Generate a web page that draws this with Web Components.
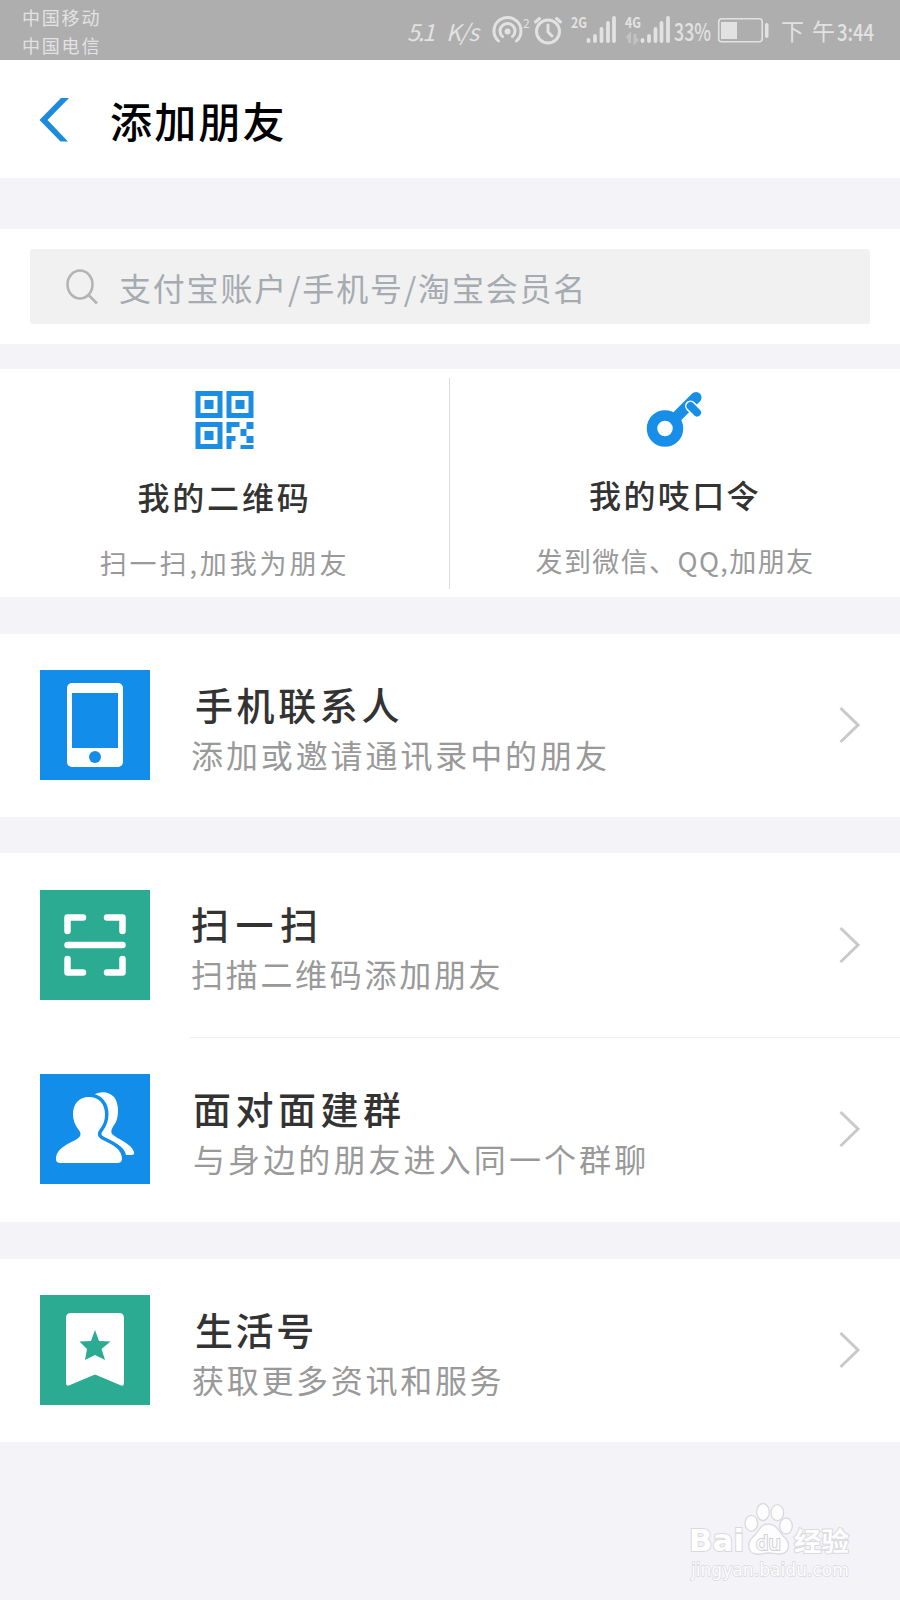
<!DOCTYPE html>
<html lang="zh-CN">
<head>
<meta charset="utf-8">
<title>添加朋友</title>
<style>
    html, body{margin:0;padding:0;}
    body{
        width:900px;
        height:1600px;
        overflow:hidden;
        background:#f4f3f8;
        font-family:"Noto Sans CJK SC", "Noto Sans", sans-serif;
        color:#333;
    }
</style>
</head>
<body>
<amigos-pagina>
    <amigos-estado slot="estado"></amigos-estado>
    <amigos-topo slot="topo">添加朋友</amigos-topo>
    <amigos-pesquisa slot="pesquisa">支付宝账户/手机号/淘宝会员名</amigos-pesquisa>

    <amigos-atalho slot="atalhos" style="--ls:2.8px;--ls-sub:2.9px">
        <svg slot="icone" width="60" height="60" viewBox="0.500 0 60 60" fill="#1b8de3">
            <path fill-rule="evenodd" d="M1 1h27v27H1zM6 6v17h17V6zM10 10h9v9h-9zM32 1h27v27H32zM37 6v17h17V6zM41 10h9v9h-9zM1 32h27v27H1zM6 37v17h17V37zM10 41h9v9h-9z"/>
            <path d="M32 32h13v5h-8v6h-5zM52 32h7v7h-7v7h7v7h-7v-7h-6v-7h6zM32 46h9v5h-4v8h-5zM46 55h13v4H46z"/>
        </svg>
        我的二维码
        <span slot="sub">扫一扫,加我为朋友</span>
    </amigos-atalho>
    <amigos-atalho slot="atalhos" style="--ls:2.4px;--ls-sub:1.4px;--sobe:-2px">
        <svg slot="icone" width="60" height="60" viewBox="0 1.500 60 60" fill="none">
            <path d="M26 34L51 9" stroke="#178ee8" stroke-width="11" stroke-linecap="round"/>
            <circle cx="20" cy="40" r="13" fill="#fff" stroke="#178ee8" stroke-width="10.500"/>
            <path d="M45.500 17.500l6.500 6.500" stroke="#fff" stroke-width="11" stroke-linecap="round"/>
            <path d="M45.500 17.500l6.500 6.500" stroke="#178ee8" stroke-width="8" stroke-linecap="round"/>
        </svg>
        我的吱口令
        <span slot="sub">发到微信、QQ,加朋友</span>
    </amigos-atalho>

    <amigos-grupo>
        <amigos-linha cor="#128eea" style="--ls:3.6px;--ls-sub:2.9px;--dx:4px">
            <svg slot="icone" width="110" height="110" viewBox="0 0 110 110">
                <rect x="27" y="13" width="56" height="84" rx="5" fill="#fff"/>
                <rect x="32" y="23" width="46" height="55" fill="#128eea"/>
                <circle cx="55" cy="87" r="6" fill="#128eea"/>
            </svg>
            手机联系人
            <span slot="sub">添加或邀请通讯录中的朋友</span>
        </amigos-linha>
    </amigos-grupo>

    <amigos-grupo>
        <amigos-linha cor="#2aab92" style="--ls:6.5px;--ls-sub:2.7px">
            <svg slot="icone" width="110" height="110" viewBox="0 0 110 110" fill="none" stroke="#fff" stroke-width="6.500" stroke-linecap="round" stroke-linejoin="round">
                <path d="M27.500 41V27.500H43M67 27.500h15.500V41M27.500 69v13.500H43M67 82.500h15.500V69M27.500 55h55"/>
            </svg>
            扫一扫
            <span slot="sub">扫描二维码添加朋友</span>
        </amigos-linha>
        <amigos-linha cor="#128eea" linha style="--ls:4.5px;--ls-sub:3.1px;--dx:2px;--dx-sub:2px">
            <svg slot="icone" width="110" height="110" viewBox="0 0 110 110" fill="#fff">
                <path d="M54 21C59 17 69 17 74 23C79 29 79 41 76 48C73 53 70 56 72 60C77 65 91 69 94 78Q95 81 91 81H86C84 69 66 67 60 61Z"/>
                <path stroke="#128eea" stroke-width="7" paint-order="stroke" d="M49 23C59 23 65 30 65 40C65 47 63 51 60 55C57 59 57 62 61 65C68 69 82 73 82 85Q82 89 77 89H21Q15 89 16 84C17 73 31 69 37 65C42 62 41 58 38 55C35 51 33 46 33 40C33 30 39 23 49 23Z"/>
            </svg>
            面对面建群
            <span slot="sub">与身边的朋友进入同一个群聊</span>
        </amigos-linha>
    </amigos-grupo>

    <amigos-grupo>
        <amigos-linha cor="#2aab92" style="--ls:2.6px;--ls-sub:2.7px;--dx:4px;--dx-sub:1px">
            <svg slot="icone" width="110" height="110" viewBox="0 0 110 110">
                <path fill="#fff" d="M31 18h48q5 0 5 5v65q0 4-4 2L55 79.500 30 90q-4 2-4-2V23q0-5 5-5z"/>
                <path fill="#2aab92" d="M55 35l4 11 11.500.500-9 7.500 3.500 11-10-5-10 5 2-11-7.500-7.500L51 46z"/>
            </svg>
            生活号
            <span slot="sub">获取更多资讯和服务</span>
        </amigos-linha>
    </amigos-grupo>

    <amigos-marca slot="rodape"></amigos-marca>
</amigos-pagina>

<script>
function criaTemplate(html) {
    const t = document.createElement('template');
    t.innerHTML = html;
    return t;
}

class amigosBase extends HTMLElement {
    constructor() {
        super();
        this.attachShadow({ mode: 'open' });
        this.shadowRoot.appendChild(this.constructor.template.content.cloneNode(true));
    }
}

// pagina inteira
class amigosPagina extends amigosBase {
    static template = criaTemplate(`
    <style>
        :host{
            display:flex;
            flex-direction:column;
            width:900px;
            height:1600px;
        }
        .atalhos{
            display:grid;
            grid-template-columns:449px 1px 450px;
            background:#fff;
            height:228px;
            margin-top:25px;
        }
        .risco{
            grid-column:2;
            grid-row:1;
            background:#dcdcde;
            margin:9px 0 8px;
        }
        ::slotted(amigos-atalho){grid-row:1;}
        .rodape{
            flex:1;
            display:flex;
            justify-content:flex-end;
            align-items:flex-end;
        }
    </style>
    <slot name="estado"></slot>
    <slot name="topo"></slot>
    <slot name="pesquisa"></slot>
    <div class="atalhos">
        <slot name="atalhos"></slot>
        <div class="risco"></div>
    </div>
    <slot></slot>
    <div class="rodape"><slot name="rodape"></slot></div>
    `);
}

// barra de estado do telemovel
class amigosEstado extends amigosBase {
    static template = criaTemplate(`
    <style>
        :host{
            display:flex;
            justify-content:space-between;
            box-sizing:border-box;
            height:60px;
            padding:0 16px 0 22px;
            background:#aeaeae;
            color:#e2e2e2;
        }
        .redes{
            padding-top:4px;
            font-size:18px;
            line-height:27.5px;
            letter-spacing:1.8px;
        }
        .redes div{white-space:nowrap;}
        svg{display:block;}
        text{fill:#e2e2e2;}
    </style>
    <div class="redes"><div>中国移动</div><div>中国电信</div></div>
    <svg width="484" height="60" viewBox="400 0 484 60" fill="none" stroke="#e2e2e2">
        <g stroke="none" font-family="Noto Sans CJK SC, sans-serif">
            <text x="407" y="41" font-size="23" font-style="italic" textLength="28">5.1</text>
            <text x="446" y="41" font-size="23" font-style="italic" textLength="33">K/s</text>
            <text x="523" y="28" font-size="12">2</text>
            <text x="571" y="28" font-size="14" font-weight="700" textLength="16" lengthAdjust="spacingAndGlyphs">2G</text>
            <text x="625" y="28" font-size="14" font-weight="700" textLength="16" lengthAdjust="spacingAndGlyphs">4G</text>
            <text x="674" y="41" font-size="24" font-weight="500" textLength="37" lengthAdjust="spacingAndGlyphs">33%</text>
            <text x="781" y="40" font-size="23">下</text>
            <text x="812" y="40" font-size="23">午</text>
            <text x="837" y="41" font-size="23" font-weight="500" textLength="37" lengthAdjust="spacingAndGlyphs">3:44</text>
        </g>
        <g stroke-width="3" stroke-linecap="round">
            <path d="M498.500 41a13.500 13.500 0 1 1 18 0"/>
            <path d="M502.500 36.500a7.500 7.500 0 1 1 10 0"/>
            <circle cx="507.500" cy="31.500" r="1.500" fill="#e2e2e2"/>
            <circle cx="548" cy="31.500" r="11.500"/>
            <path d="M548 25v7l4 4M535.500 22l4-3.500M560.500 22l-4-3.500"/>
        </g>
        <g stroke-width="3.800" stroke-linecap="round">
            <path d="M588.500 40v1M595 36v5M601.500 29v12M608 23v18M614 18v23"/>
            <path d="M642.500 40v1M649 36v5M655.500 29v12M661.500 23v18M668 18v23"/>
        </g>
        <path d="M629.500 43v-8l-3 3M635 34v8l3-3" stroke="#c2c2c2" stroke-width="3"/>
        <rect x="718.700" y="18.700" width="43.500" height="23" rx="3" stroke-width="1.600"/>
        <rect x="721" y="22" width="16" height="17" fill="#e2e2e2" stroke="none"/>
        <rect x="765" y="23" width="3.500" height="15" rx="1.700" fill="#e2e2e2" stroke="none"/>
    </svg>
    `);
}

class amigosTopo extends amigosBase {
    static template = criaTemplate(`
    <style>
        :host{
            display:flex;
            align-items:center;
            box-sizing:border-box;
            height:118px;
            padding:2px 0 0 39px;
            background:#fff;
            color:#000;
            font-size:42px;
            line-height:60px;
            font-weight:500;
            letter-spacing:2.2px;
        }
        svg{display:block;margin-right:40px;}
    </style>
    <svg width="31" height="44" viewBox="0 0 31 44"><path fill="#1d8bdc" d="M22 0h8L8.500 22 29 43.500h-7.500L.500 22z"/></svg>
    <slot></slot>
    `);
}

class amigosPesquisa extends amigosBase {
    static template = criaTemplate(`
    <style>
        :host{
            display:block;
            margin-top:51px;
            padding:20px 30px;
            background:#fff;
        }
        .caixa{
            display:flex;
            align-items:center;
            height:75px;
            padding-left:36px;
            border-radius:3px;
            background:#f1f1f1;
            color:#a5abb1;
            font-size:32px;
            letter-spacing:1.8px;
            white-space:nowrap;
        }
        svg{display:block;margin-right:20px;}
    </style>
    <div class="caixa">
        <svg width="33" height="38" viewBox="0 0 33 38" fill="none" stroke="#b4b4b4" stroke-width="2.600">
            <ellipse cx="14" cy="16.500" rx="12.500" ry="14"/>
            <path d="M22.500 27l8.500 8.500"/>
        </svg>
        <slot></slot>
    </div>
    `);
}

// metade do bloco com icone em cima
class amigosAtalho extends amigosBase {
    static template = criaTemplate(`
    <style>
        :host{
            display:flex;
            flex-direction:column;
            align-items:center;
            padding-top:21px;
        }
        .titulo{
            margin-top:calc(22px + var(--sobe, 0px));
            font-size:32px;
            line-height:48px;
            font-weight:500;
            letter-spacing:var(--ls, 0);
            white-space:nowrap;
        }
        .sub{
            margin-top:23px;
            font-size:27px;
            line-height:40px;
            color:#999;
            letter-spacing:var(--ls-sub, 0);
            white-space:nowrap;
        }
        ::slotted(svg){display:block;}
    </style>
    <slot name="icone"></slot>
    <div class="titulo"><slot></slot></div>
    <div class="sub"><slot name="sub"></slot></div>
    `);
}

// cartao branco com uma ou mais linhas
class amigosGrupo extends amigosBase {
    static template = criaTemplate(`
    <style>
        :host{
            display:block;
            margin-top:36.5px;
            background:#fff;
        }
    </style>
    <slot></slot>
    `);
}

class amigosLinha extends amigosBase {
    static template = criaTemplate(`
    <style>
        :host{
            display:flex;
            align-items:center;
            box-sizing:border-box;
            height:183px;
            padding:0 39px 0 40px;
        }
        .icone{
            width:110px;
            height:110px;
            margin-right:41px;
        }
        .textos{
            flex:1;
            padding-top:7px;
            line-height:51px;
            white-space:nowrap;
        }
        .titulo{
            padding-left:var(--dx, 0);
            font-size:38px;
            font-weight:500;
            letter-spacing:var(--ls, 0);
        }
        .sub{
            padding-left:var(--dx-sub, 0);
            font-size:32px;
            color:#999;
            letter-spacing:var(--ls-sub, 0);
        }
        .risco{display:none;}
        :host([linha]){
            height:186px;
            padding-top:1px;
            flex-wrap:wrap;
            align-content:flex-start;
        }
        :host([linha]) .risco{
            display:block;
            flex:0 0 710px;
            height:1px;
            margin:0 -39px 36px 150px;
            background:#efeff0;
        }
    </style>
    <div class="risco"></div>
    <div class="icone"><slot name="icone"></slot></div>
    <div class="textos">
        <div class="titulo"><slot></slot></div>
        <div class="sub"><slot name="sub"></slot></div>
    </div>
    <svg width="22" height="38" viewBox="0 0 22 38" fill="none" stroke="#c9c9c9" stroke-width="3"><path d="M1.500 2L19 19 1.500 36"/></svg>
    `);

    connectedCallback() {
        this.shadowRoot.querySelector('.icone').style.background = this.getAttribute('cor');
    }
}

// marca no canto inferior
class amigosMarca extends amigosBase {
    static template = criaTemplate(`
    <style>
        :host{display:block;margin:0 46px 13px 0;}
        svg{display:block;}
        text{paint-order:stroke;}
    </style>
    <svg width="166" height="86" viewBox="0 0 166 86" fill="#fdfdfe" stroke="#dadade" stroke-width="2">
        <text x="1" y="50" font-family="DejaVu Sans, sans-serif" font-weight="700" font-size="31" textLength="55" lengthAdjust="spacingAndGlyphs">Bai</text>
        <g stroke-width="1.300">
            <ellipse cx="63.300" cy="22.300" rx="6.300" ry="8"/>
            <ellipse cx="75" cy="11" rx="6.300" ry="8.500"/>
            <ellipse cx="89.300" cy="11.700" rx="6.300" ry="8"/>
            <ellipse cx="98" cy="25" rx="6.300" ry="8"/>
            <path d="M80 23c9 0 11 8 16 13 7 6 6 17-5 17-5 0-7-1-11-1s-7 2-12 1c-9-1-9-12-3-17 6-5 7-13 15-13z"/>
        </g>
        <text x="68" y="49" font-family="DejaVu Sans, sans-serif" font-size="20" stroke="#cfcfd4" textLength="25" lengthAdjust="spacingAndGlyphs">du</text>
        <text x="106" y="49.500" font-family="Noto Sans CJK SC, sans-serif" font-weight="700" font-size="26" textLength="55" lengthAdjust="spacingAndGlyphs">经验</text>
        <text x="3" y="74.500" font-family="DejaVu Sans, sans-serif" font-size="18" stroke-width="1.500" textLength="158" lengthAdjust="spacingAndGlyphs">jingyan.baidu.com</text>
    </svg>
    `);
}

window.customElements.define('amigos-pagina', amigosPagina);
window.customElements.define('amigos-estado', amigosEstado);
window.customElements.define('amigos-topo', amigosTopo);
window.customElements.define('amigos-pesquisa', amigosPesquisa);
window.customElements.define('amigos-atalho', amigosAtalho);
window.customElements.define('amigos-grupo', amigosGrupo);
window.customElements.define('amigos-linha', amigosLinha);
window.customElements.define('amigos-marca', amigosMarca);
</script>
</body>
</html>
